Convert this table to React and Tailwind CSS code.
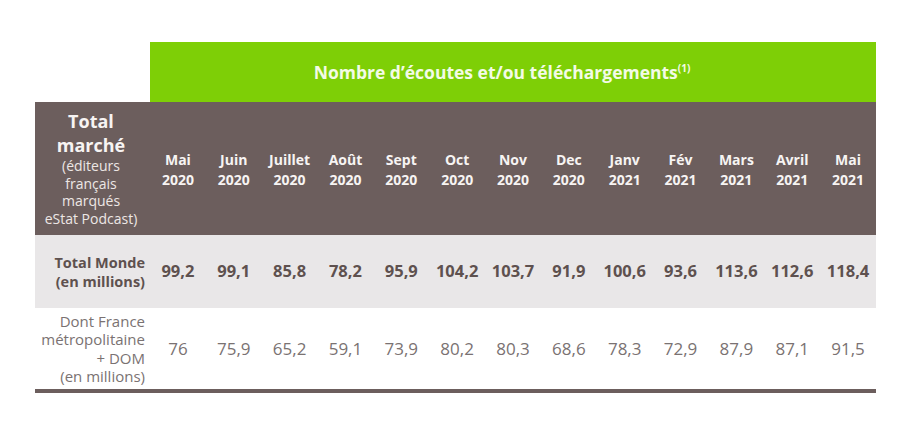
import React from "react";

const months = [
  ["Mai", "2020"], ["Juin", "2020"], ["Juillet", "2020"], ["Août", "2020"], ["Sept", "2020"],
  ["Oct", "2020"], ["Nov", "2020"], ["Dec", "2020"], ["Janv", "2021"], ["Fév", "2021"],
  ["Mars", "2021"], ["Avril", "2021"], ["Mai", "2021"],
];
const monde = ["99,2", "99,1", "85,8", "78,2", "95,9", "104,2", "103,7", "91,9", "100,6", "93,6", "113,6", "112,6", "118,4"];
const france = ["76", "75,9", "65,2", "59,1", "73,9", "80,2", "80,3", "68,6", "78,3", "72,9", "87,9", "87,1", "91,5"];

export default function App() {
  return (
    <div className="w-[900px] h-[444px] bg-white pt-[42px] pl-[35px]" style={{ fontFamily: '"Open Sans", "Noto Sans", sans-serif' }}>
      <div className="w-[841px] grid grid-cols-[115px_repeat(13,1fr)]">
        <div />
        <div className="col-span-13 h-[60px] bg-[#7ecf06] flex items-center justify-center text-[#f3fbe6] font-bold text-[17.5px] pr-[22px]">
          <span>Nombre d’écoutes et/ou téléchargements<span className="text-[10px] relative -top-[7px]">(1)</span></span>
        </div>

        <div className="h-[133px] bg-[#6c5e5d] text-[#f7f4f3] flex flex-col items-center justify-center text-center pr-[3px]">
          <div className="font-bold text-[18px] leading-[23.5px]">Total<br />marché</div>
          <div className="text-[14px] leading-[17.5px] text-[#ede7e5] whitespace-nowrap">(éditeurs<br />français<br />marqués<br />eStat Podcast)</div>
        </div>
        {months.map(([m, y], i) => (
          <div key={i} className="h-[133px] bg-[#6c5e5d] text-[#f7f4f3] font-bold text-[14px] leading-[20px] flex flex-col items-center justify-center text-center pt-[3px]">
            <div>{m}</div>
            <div>{y}</div>
          </div>
        ))}

        <div className="h-[73px] bg-[#e9e7e8] text-[#5e514f] font-bold text-[14.5px] leading-[19px] flex flex-col items-end justify-center text-right pr-[5px] whitespace-nowrap">
          <div>Total Monde</div>
          <div>(en millions)</div>
        </div>
        {monde.map((v, i) => (
          <div key={i} className="h-[73px] bg-[#e9e7e8] text-[#5e514f] font-bold text-[16.5px] flex items-center justify-center">
            {v}
          </div>
        ))}

        <div className="h-[85px] text-[#7a7272] text-[15px] leading-[18.5px] flex flex-col items-end justify-center text-right pr-[5px] border-b-4 border-[#6c5e5d] whitespace-nowrap">
          <div>Dont France</div>
          <div>métropolitaine</div>
          <div>+ DOM</div>
          <div>(en millions)</div>
        </div>
        {france.map((v, i) => (
          <div key={i} className="h-[85px] text-[#7a7272] text-[17px] flex items-center justify-center border-b-4 border-[#6c5e5d]">
            {v}
          </div>
        ))}
      </div>
    </div>
  );
}
